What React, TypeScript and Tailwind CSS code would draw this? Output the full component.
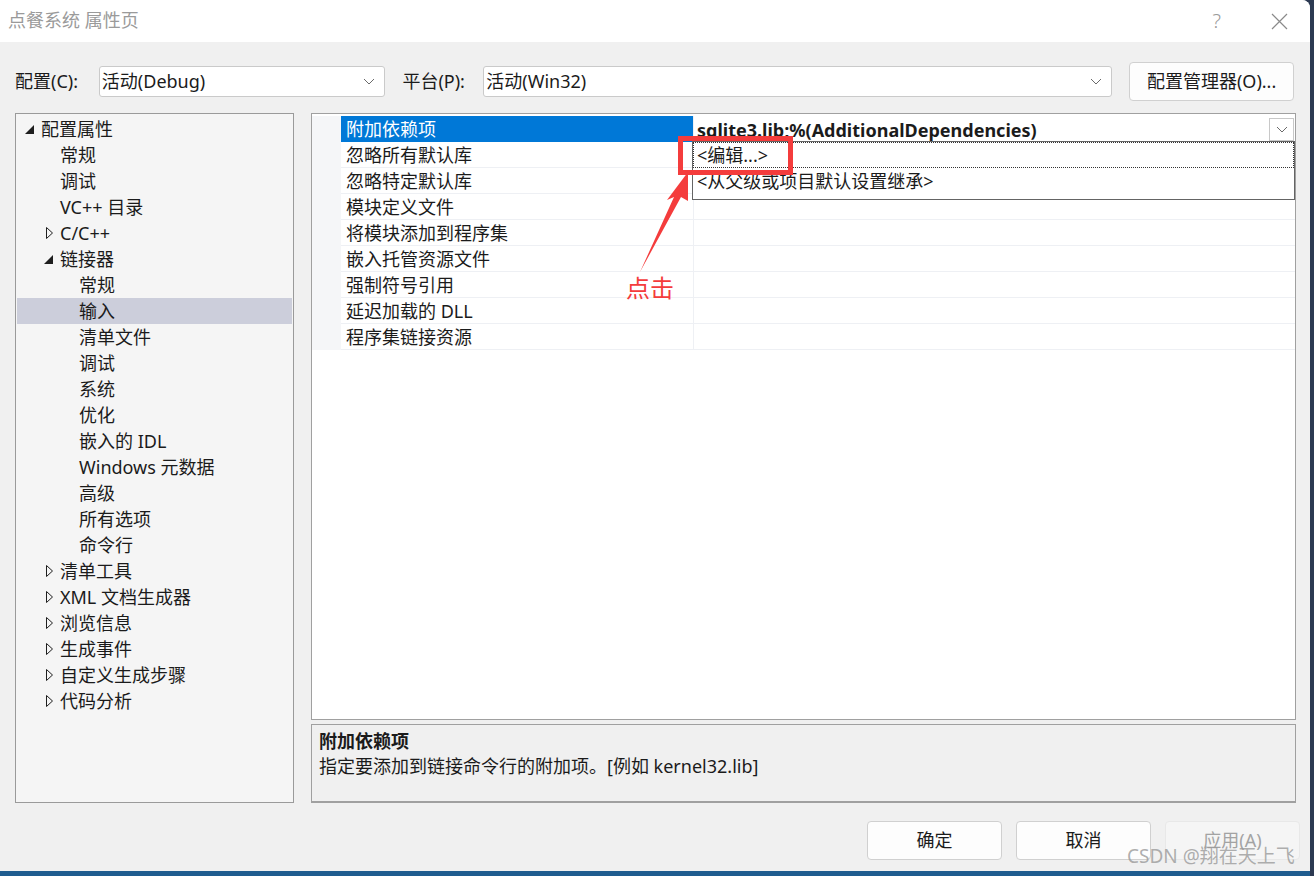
import React from "react";

type TreeItem = { label: string; level: number; arrow?: "open" | "closed"; selected?: boolean };

const tree: TreeItem[] = [
  { label: "配置属性", level: 0, arrow: "open" },
  { label: "常规", level: 1 },
  { label: "调试", level: 1 },
  { label: "VC++ 目录", level: 1 },
  { label: "C/C++", level: 1, arrow: "closed" },
  { label: "链接器", level: 1, arrow: "open" },
  { label: "常规", level: 2 },
  { label: "输入", level: 2, selected: true },
  { label: "清单文件", level: 2 },
  { label: "调试", level: 2 },
  { label: "系统", level: 2 },
  { label: "优化", level: 2 },
  { label: "嵌入的 IDL", level: 2 },
  { label: "Windows 元数据", level: 2 },
  { label: "高级", level: 2 },
  { label: "所有选项", level: 2 },
  { label: "命令行", level: 2 },
  { label: "清单工具", level: 1, arrow: "closed" },
  { label: "XML 文档生成器", level: 1, arrow: "closed" },
  { label: "浏览信息", level: 1, arrow: "closed" },
  { label: "生成事件", level: 1, arrow: "closed" },
  { label: "自定义生成步骤", level: 1, arrow: "closed" },
  { label: "代码分析", level: 1, arrow: "closed" },
];

const props = [
  "附加依赖项",
  "忽略所有默认库",
  "忽略特定默认库",
  "模块定义文件",
  "将模块添加到程序集",
  "嵌入托管资源文件",
  "强制符号引用",
  "延迟加载的 DLL",
  "程序集链接资源",
];

const indent = ["pl-[5px]", "pl-[24px]", "pl-[43px]"];

function Chevron() {
  return (
    <svg width="12" height="7" viewBox="0 0 12 7" fill="none">
      <path d="M1 1 L6 6 L11 1" stroke="#6a6a6a" strokeWidth="1" />
    </svg>
  );
}

function Arrow({ kind }: { kind?: "open" | "closed" }) {
  if (!kind) return null;
  if (kind === "open")
    return (
      <svg width="11" height="11" viewBox="0 0 11 11" className="ml-[2px]">
        <polygon points="10,1 10,10 1,10" fill="#1e1e1e" />
      </svg>
    );
  return (
    <svg width="11" height="12" viewBox="0 0 11 12" className="ml-[4px]">
      <polygon points="1.5,0.5 7.5,6 1.5,11.5" fill="none" stroke="#1e1e1e" strokeWidth="1" />
    </svg>
  );
}

export default function App() {
  return (
    <div className="w-[1314px] h-[876px] bg-[#2c3a52] overflow-hidden font-['Noto_Sans','Noto_Sans_CJK_SC',sans-serif] text-[#1b1b1b]">
      <div className="relative w-[1310px] h-[871px] bg-[#f0f0f0] rounded-tr-[8px] overflow-hidden flex flex-col">
        {/* title bar */}
        <div className="h-[42px] bg-white flex items-center justify-between shrink-0">
          <div className="pl-[8px] text-[18px] text-[#9a9a9a] leading-none pb-[2px]">点餐系统 属性页</div>
          <div className="flex items-center pr-[22px] gap-[50px] text-[#9a9a9a]">
            <span className="text-[20px] leading-none font-light">?</span>
            <svg width="17" height="17" viewBox="0 0 17 17">
              <path d="M1 1 L16 16 M16 1 L1 16" stroke="#8a8a8a" strokeWidth="1.2" />
            </svg>
          </div>
        </div>

        {/* config row */}
        <div className="flex items-center h-[39px] mt-[20px] pl-[15px] pr-[16px] text-[18px] shrink-0">
          <span className="w-[84px]">配置(C):</span>
          <div className="w-[287px] h-[31px] bg-white border border-[#cacaca] rounded-[3px] flex items-center justify-between pl-[2px] pr-[9px]">
            <span>活动(Debug)</span>
            <Chevron />
          </div>
          <span className="ml-[17px] w-[81px]">平台(P):</span>
          <div className="w-[630px] h-[31px] bg-white border border-[#cacaca] rounded-[3px] flex items-center justify-between pl-[2px] pr-[9px]">
            <span>活动(Win32)</span>
            <Chevron />
          </div>
          <div className="ml-[17px] w-[165px] h-[39px] bg-[#fdfdfd] border border-[#d0d0d0] rounded-[4px] flex items-center justify-center">
            配置管理器(O)...
          </div>
        </div>

        {/* main panels */}
        <div className="flex mt-[12px] pl-[15px] pr-[14px] gap-[17px] h-[690px] shrink-0">
          {/* tree */}
          <div className="w-[279px] h-full border border-[#9a9a9a] bg-[#f5f5f5] pt-[2px] px-[1px] text-[18px]">
            {tree.map((t, i) => (
              <div
                key={i}
                className={`h-[26px] flex items-center ${indent[t.level]} ${t.selected ? "bg-[#cccedb]" : ""}`}
              >
                <div className="w-[19px] flex items-center">
                  <Arrow kind={t.arrow} />
                </div>
                <span className="leading-none">{t.label}</span>
              </div>
            ))}
          </div>

          {/* right column */}
          <div className="flex-1 flex flex-col gap-[4px]">
            <div className="relative h-[607px] border border-[#a0a0a0] bg-white pt-[2px] text-[18px]">
              {props.map((p, i) => (
                <div key={i} className="h-[26px] flex">
                  <div className="w-[29px] bg-[#f5f6f8]" />
                  <div
                    className={`w-[352px] flex items-center pl-[5px] ${
                      i === 0 ? "bg-[#0078d7] text-white" : "border-b border-[#eef0f4]"
                    }`}
                  >
                    <span className="leading-none">{p}</span>
                  </div>
                  <div className={`flex-1 flex items-center border-l border-[#eef0f4] ${i === 0 ? "" : "border-b border-[#eef0f4]"}`}>
                    {i === 0 && (
                      <div className="flex-1 flex items-center justify-between pl-[3px] pr-[1px]">
                        <span className="font-bold leading-none pt-[2px]">sqlite3.lib;%(AdditionalDependencies)</span>
                        <div className="w-[25px] h-[23px] border border-[#c8c8c8] bg-white flex items-center justify-center">
                          <Chevron />
                        </div>
                      </div>
                    )}
                  </div>
                </div>
              ))}
              {/* dropdown list */}
              <div className="absolute left-[380px] right-0 top-[27px] h-[59px] bg-white border border-[#646464] text-[18px]">
                <div className="h-[26px] border border-dotted border-[#333] flex items-center pl-[3px]">
                  <span className="leading-none">&lt;编辑...&gt;</span>
                </div>
                <div className="h-[26px] flex items-center pl-[4px]">
                  <span className="leading-none">&lt;从父级或项目默认设置继承&gt;</span>
                </div>
              </div>
            </div>
            <div className="h-[79px] border border-[#a0a0a0] border-b-2 bg-[#f0f0f0] pl-[7px] pt-[4px] text-[18px]">
              <div className="font-bold leading-[25px]">附加依赖项</div>
              <div className="leading-[25px]">指定要添加到链接命令行的附加项。[例如 kernel32.lib]</div>
            </div>
          </div>
        </div>

        {/* bottom buttons */}
        <div className="flex justify-end gap-[14px] mt-[18px] pr-[10px] text-[18px]">
          <div className="w-[135px] h-[39px] bg-[#fdfdfd] border border-[#d0d0d0] rounded-[4px] flex items-center justify-center">确定</div>
          <div className="w-[135px] h-[39px] bg-[#fdfdfd] border border-[#d0d0d0] rounded-[4px] flex items-center justify-center">取消</div>
          <div className="w-[135px] h-[39px] bg-[#f5f5f5] border border-[#e8e8e8] rounded-[4px] flex items-center justify-center text-[#a3a3a3]">应用(A)</div>
        </div>

        {/* annotations */}
        <div className="absolute left-[678px] top-[136px] w-[115px] h-[39px] border-[5px] border-[#f43c3c]" />
        <svg className="absolute left-0 top-0" width="1310" height="871" viewBox="0 0 1310 871">
          <polygon points="640,272 674,197 667,200 688,172 688,201 681,197" fill="#f43c3c" />
        </svg>
        <div className="absolute left-[626px] top-[276px] text-[24px] text-[#f43c3c] leading-none">点击</div>
        <div className="absolute left-[1127px] top-[847px] text-[19px] text-[#9a9a9a]/80 leading-none">CSDN @翔在天上飞</div>
      </div>
      <div className="h-[5px] w-[1310px] bg-[#1f5c8f]" />
    </div>
  );
}
